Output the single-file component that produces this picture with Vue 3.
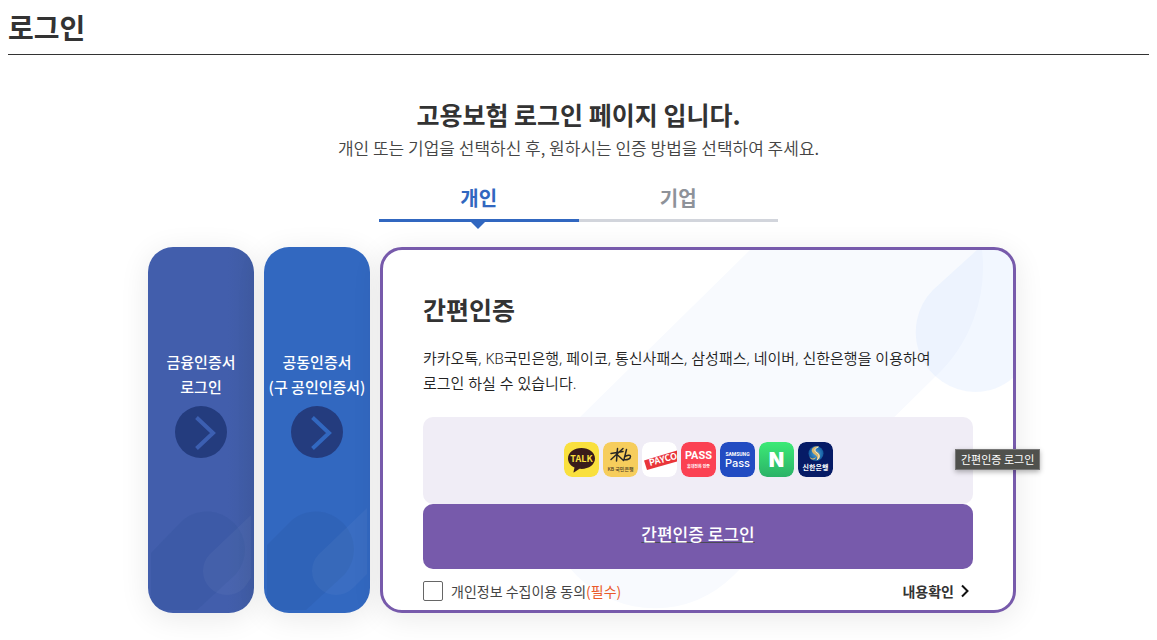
<template>
  <div class="login-page">
    <header class="page-head">
      <h1>로그인</h1>
    </header>
    <main>
      <div class="intro">
        <h2>고용보험 로그인 페이지 입니다.</h2>
        <p>개인 또는 기업을 선택하신 후, 원하시는 인증 방법을 선택하여 주세요.</p>
      </div>

      <div class="tabs" role="tablist">
        <button
          v-for="tab in tabs"
          :key="tab"
          type="button"
          role="tab"
          class="tab"
          :class="{ active: tab === currentTab }"
          :aria-selected="tab === currentTab"
          @click="currentTab = tab"
        >
          {{ tab }}
        </button>
      </div>

      <div class="cards">
        <button
          v-for="cert in certs"
          :key="cert.name"
          type="button"
          class="cert"
          :class="cert.name"
        >
          <svg class="cert-bg" viewBox="0 0 106 366" aria-hidden="true">
            <path class="leaf-dark" :d="cert.leafDark" />
            <path class="leaf-light" :d="cert.leafLight" />
          </svg>
          <span class="cert-label">{{ cert.line1 }}<br />{{ cert.line2 }}</span>
          <svg class="cert-arrow" viewBox="0 0 52 52" aria-hidden="true">
            <circle cx="26" cy="26" r="26" />
            <path d="M21.500 11.500L38 27L21.500 42.500" />
          </svg>
        </button>

        <section class="simple">
          <svg class="simple-bg" viewBox="0 0 630 360" preserveAspectRatio="xMaxYMin slice" aria-hidden="true">
            <path
              class="band"
              d="M367 0L194 170A110 110 0 0 0 350 326L552 127A150 150 0 0 0 599 0Z"
            />
            <path
              class="drop"
              d="M594 0L550 40A60 60 0 0 0 592 142A60 60 0 0 0 630 128V0Z"
            />
          </svg>
          <h3>간편인증</h3>
          <p class="desc">
            카카오톡, KB국민은행, 페이코, 통신사패스, 삼성패스, 네이버, 신한은행을 이용하여<br />
            로그인 하실 수 있습니다.
          </p>
          <div class="providers">
            <svg viewBox="0 0 35 35" role="img" aria-label="카카오톡">
              <rect class="kakao" width="35" height="35" rx="8" />
              <path
                class="bubble"
                d="M17.500 6C10 6 4 10.500 4 16.500c0 4 2.600 7.300 6.500 9.100L9.500 30c-.1.500.3.600.7.300l5.300-3.500c.7.100 1.300.100 2 .1C25 26.900 31 22.400 31 16.500S25 6 17.500 6z"
              />
              <text class="t-kakao" x="17.500" y="20">TALK</text>
            </svg>
            <svg viewBox="0 0 35 35" role="img" aria-label="KB국민은행">
              <rect class="kb" width="35" height="35" rx="8" />
              <path
                class="kb-mark"
                d="M8 11.500L20 9.500M14.500 6.500L13.500 19M20 6.500L8 17.500M13.500 12L20.500 18.500M23.500 7.500L21 17.500C23.500 18.500 27.500 17 27.500 14.500C27.500 12.500 24 13 21.500 15"
              />
              <text class="t-kb" x="17.500" y="29">KB 국민은행</text>
            </svg>
            <svg viewBox="0 0 35 35" role="img" aria-label="페이코">
              <rect class="payco" width="35" height="35" rx="8" />
              <path class="payco-bar" d="M2 18.500L35 8.500V19.500L5 28Z" />
              <text class="t-payco" x="8" y="24" transform="rotate(-15 8 24)">PAYCO</text>
            </svg>
            <svg viewBox="0 0 35 35" role="img" aria-label="통신사패스">
              <rect class="pass" width="35" height="35" rx="8" />
              <text class="t-pass" x="17.500" y="17">PASS</text>
              <text class="t-pass-sub" x="17.500" y="26">휴대전화 인증</text>
            </svg>
            <svg viewBox="0 0 35 35" role="img" aria-label="삼성패스">
              <rect class="samsung" width="35" height="35" rx="8" />
              <text class="t-samsung" x="17.500" y="14">SAMSUNG</text>
              <text class="t-samsung-pass" x="17.500" y="25">Pass</text>
            </svg>
            <svg viewBox="0 0 35 35" role="img" aria-label="네이버">
              <defs>
                <linearGradient id="naver" x1="0" y1="0" x2="0" y2="1">
                  <stop offset="0" stop-color="#3cea76" />
                  <stop offset="1" stop-color="#2bb267" />
                </linearGradient>
              </defs>
              <rect width="35" height="35" rx="8" fill="url(#naver)" />
              <text class="t-naver" x="17.500" y="25">N</text>
            </svg>
            <svg viewBox="0 0 35 35" role="img" aria-label="신한은행">
              <defs>
                <radialGradient id="shinhan">
                  <stop offset="0" stop-color="#4aa3dc" />
                  <stop offset="1" stop-color="#125a9f" />
                </radialGradient>
              </defs>
              <rect class="shinhan" width="35" height="35" rx="8" />
              <circle cx="18" cy="11.500" r="7.500" fill="url(#shinhan)" />
              <path
                class="shinhan-gold"
                d="M21 4.500C16 3.500 12 7 14.500 10.500C16.500 13 21 14 18.500 18.500C24 16 22.500 12 19 10C16.500 8.500 17 5.500 21 4.500ZM11.500 14.500C13 17 16 17 18 15C17 19 12 18 11.500 14.500Z"
              />
              <path class="shinhan-line" d="M20.500 5C16 6.500 16 9 19 11C21.500 12.700 21.500 15.500 19 18" />
              <text class="t-shinhan" x="17.500" y="28">신한은행</text>
            </svg>
          </div>
          <button type="button" class="login-btn">간편인증 로그인</button>
          <div class="agree">
            <input id="agree" v-model="agreed" type="checkbox" />
            <label for="agree">개인정보 수집이용 동의<em>(필수)</em></label>
            <a href="#terms" class="more">
              내용확인
              <svg viewBox="0 0 10 14" aria-hidden="true"><path d="M2 1.500L7.500 7L2 12.500" /></svg>
            </a>
          </div>
          <span class="tooltip" role="tooltip">간편인증 로그인</span>
        </section>
      </div>
    </main>
  </div>
</template>

<script setup>
import { ref } from "vue";

const tabs = ["개인", "기업"];
const currentTab = ref("개인");
const agreed = ref(false);

const certs = [
  {
    name: "finance",
    line1: "금융인증서",
    line2: "로그인",
    leafDark: "M3 306L35 273A38 38 0 0 1 88 327L49 363H3Z",
    leafLight: "M103 268L62 307A24 24 0 0 0 96 341L103 331Z",
  },
  {
    name: "joint",
    line1: "공동인증서",
    line2: "(구 공인인증서)",
    leafDark: "M3 298L28 273A38 38 0 0 1 81 327L42 363H3Z",
    leafLight: "M103 261L55 307A24 24 0 0 0 89 341L103 327Z",
  },
];
</script>

<style>
body {
  background: #fff;
}
</style>

<style scoped>
.login-page {
  font-family: "Noto Sans CJK KR", sans-serif;
  color: #333;
  overflow: hidden;
}
button {
  font-family: inherit;
  border: 0;
  padding: 0;
  background: none;
  cursor: pointer;
}
h1,
h2,
h3,
p {
  margin: 0;
}
.page-head {
  margin: 0 8px;
  padding: 7px 0;
  border-bottom: 1px solid #333;
}
h1 {
  font-size: 28px;
  line-height: 40px;
  font-weight: 700;
}
.intro {
  padding-top: 43px;
  text-align: center;
}
h2 {
  font-size: 25px;
  line-height: 32px;
  font-weight: 700;
}
.intro p {
  margin-top: 5px;
  font-size: 17px;
  line-height: 26px;
  font-weight: 350;
  color: #444;
}

/* 개인 / 기업 탭 */
.tabs {
  display: flex;
  max-width: 399px;
  margin: 17px auto 0;
}
.tab {
  position: relative;
  flex: 1;
  padding: 2px 0 3px;
  border-bottom: 3px solid #d2d5dc;
  font-size: 20px;
  line-height: 36px;
  font-weight: 700;
  color: #8e9299;
}
.tab.active {
  color: #3167c0;
  border-color: #3167c0;
}
.tab.active::after {
  content: "";
  position: absolute;
  left: 50%;
  top: 100%;
  margin: 3px 0 0 -8px;
  border: 7px solid transparent;
  border-top-color: #3167c0;
}

.cards {
  display: flex;
  gap: 10px;
  max-width: 868px;
  margin: 25px auto 0;
  padding: 0 0 27px 7px;
}
.cert {
  position: relative;
  flex: 0 0 106px;
  display: flex;
  flex-direction: column;
  align-items: center;
  gap: 7px;
  padding-top: 102px;
  overflow: hidden;
  border-radius: 25px;
  color: #fff;
}
.cert,
.simple {
  box-shadow: 0 5px 30px rgba(0, 0, 0, 0.09);
}
.finance {
  background: linear-gradient(90deg, #425eac 75%, #3f5ba2);
}
.joint {
  background: #3268c0;
}
.cert-bg {
  position: absolute;
  inset: 0;
  width: 100%;
  height: 100%;
}
.leaf-dark {
  fill: rgba(35, 75, 140, 0.16);
}
.leaf-light {
  fill: rgba(255, 255, 255, 0.04);
}
.cert-label {
  position: relative;
  font-size: 15px;
  line-height: 25px;
  font-weight: 500;
  white-space: nowrap;
}
.cert-arrow {
  position: relative;
  width: 52px;
  height: 52px;
}
.cert-arrow circle {
  fill: #243c7e;
}
.cert-arrow path {
  fill: none;
  stroke: #3c5fb1;
  stroke-width: 4;
}
.joint .cert-arrow path {
  stroke: #3268c0;
}

/* 간편인증 */
.simple {
  position: relative;
  flex: 1;
  padding: 39px 40px 9px;
  border: 3px solid #775aab;
  border-radius: 22px;
  background: #fff;
}
.simple > * {
  position: relative;
}
.simple > .simple-bg {
  position: absolute;
  inset: 0;
  width: 100%;
  height: 100%;
  border-radius: 19px;
}
.band {
  fill: #f8fafe;
}
.drop {
  fill: rgba(205, 222, 255, 0.25);
}
h3 {
  font-size: 25px;
  line-height: 40px;
  font-weight: 700;
}
.desc {
  margin-top: 17px;
  font-family: "Noto Sans", "Noto Sans CJK KR", sans-serif;
  font-size: 15px;
  line-height: 25px;
  font-weight: 350;
  color: #222;
}
.providers {
  display: flex;
  justify-content: center;
  gap: 4px;
  margin-top: 21px;
  padding: 25px 0 27px;
  border-radius: 10px;
  background: #f0edf6;
}
.providers svg {
  width: 35px;
  height: 35px;
  border-radius: 8px;
}
.providers text {
  text-anchor: middle;
  fill: #fff;
  font-family: "Noto Sans CJK KR", sans-serif;
}
.kakao {
  fill: #f9e03e;
}
.bubble {
  fill: #391b1b;
}
.providers .t-kakao {
  fill: #f9e03e;
  font: 700 9px "Noto Sans CJK KR", sans-serif;
}
.kb {
  fill: #f6cd5c;
}
.kb-mark {
  fill: none;
  stroke: #292724;
  stroke-width: 1.5;
  stroke-linecap: round;
}
.providers .t-kb {
  fill: #4d4027;
  font-size: 5px;
  font-weight: 500;
}
.payco {
  fill: #fff;
}
.payco-bar {
  fill: #e9353a;
}
.providers .t-payco {
  text-anchor: start;
  font: 700 9px "Noto Sans CJK KR", sans-serif;
}
.pass {
  fill: #fb4253;
}
.providers .t-pass {
  font: 700 11px Roboto, sans-serif;
}
.providers .t-pass-sub {
  font-size: 4px;
  font-weight: 700;
}
.samsung {
  fill: #224cc2;
}
.providers .t-samsung {
  font: 700 5px Roboto, sans-serif;
}
.providers .t-samsung-pass {
  font: 500 11px Inter, sans-serif;
}
.providers .t-naver {
  font: 900 20px Inter, sans-serif;
}
.shinhan {
  fill: #061b66;
}
.shinhan-gold {
  fill: #d6b66e;
}
.shinhan-line {
  fill: none;
  stroke: #f4ecd5;
}
.providers .t-shinhan {
  font-size: 7px;
  font-weight: 700;
}
.login-btn {
  display: block;
  width: 100%;
  padding-bottom: 5px;
  border-radius: 10px;
  background: #775aab;
  color: #fff;
  font-size: 17px;
  line-height: 60px;
  font-weight: 500;
  text-decoration: underline 1px #4a4a55;
  text-decoration-skip-ink: none;
  text-underline-offset: 1px;
}
.agree {
  display: flex;
  align-items: center;
  margin-top: 12px;
  font-size: 14px;
  line-height: 20px;
  color: #444;
}
.agree input {
  appearance: none;
  width: 20px;
  height: 20px;
  margin: 0 8px 0 0;
  border: 1px solid #666;
  border-radius: 2px;
  background: #fff;
}
.agree input:checked {
  background: #775aab;
}
.agree em {
  font-style: normal;
  color: #ea5a2a;
}
.more {
  display: flex;
  align-items: center;
  gap: 6px;
  margin-left: auto;
  padding-right: 3px;
  color: #333;
  font-weight: 700;
  text-decoration: none;
}
.more svg {
  width: 10px;
  height: 14px;
  fill: none;
  stroke: #111;
  stroke-width: 2;
}
.simple > .tooltip {
  position: absolute;
  left: calc(100% - 58px);
  top: 199px;
  padding: 0 5px;
  border: 1px solid #777;
  background: #50514d;
  box-shadow: 0 2px 5px rgba(0, 0, 0, 0.3);
  color: #fff;
  font-size: 11px;
  line-height: 19px;
  white-space: nowrap;
}
</style>
